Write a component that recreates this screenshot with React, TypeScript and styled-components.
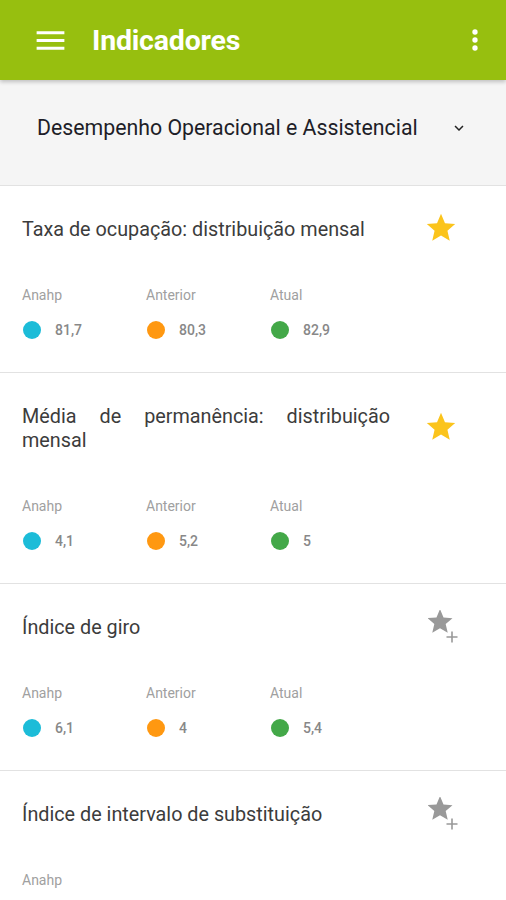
import styled, { createGlobalStyle } from 'styled-components';

type SeriesKey = 'anahp' | 'anterior' | 'atual';

type Indicator = {
  id: string;
  title: string;
  favorite: boolean;
  values: Partial<Record<SeriesKey, string>>;
};

const INDICATORS: Indicator[] = [
  {
    id: 'ocupacao',
    title: 'Taxa de ocupação: distribuição mensal',
    favorite: true,
    values: { anahp: '81,7', anterior: '80,3', atual: '82,9' },
  },
  {
    id: 'permanencia',
    title: 'Média de permanência: distribuição mensal',
    favorite: true,
    values: { anahp: '4,1', anterior: '5,2', atual: '5' },
  },
  {
    id: 'giro',
    title: 'Índice de giro',
    favorite: false,
    values: { anahp: '6,1', anterior: '4', atual: '5,4' },
  },
  {
    id: 'intervalo',
    title: 'Índice de intervalo de substituição',
    favorite: false,
    values: { anahp: '' },
  },
];

const SERIES: { key: SeriesKey; label: string; color: string }[] = [
  { key: 'anahp', label: 'Anahp', color: '#1cbcd8' },
  { key: 'anterior', label: 'Anterior', color: '#ff9811' },
  { key: 'atual', label: 'Atual', color: '#43a848' },
];

const GlobalStyle = createGlobalStyle`
  html, body {
    margin: 0;
    padding: 0;
    background: #fff;
  }
  body {
    font-family: Roboto, 'Noto Sans', Arial, sans-serif;
    -webkit-font-smoothing: antialiased;
  }
`;

const Screen = styled.div`
  width: 506px;
  height: 900px;
  overflow: hidden;
  background: #fff;
`;

const AppBar = styled.header`
  position: relative;
  z-index: 2;
  height: 80px;
  display: flex;
  align-items: center;
  padding: 0 15px 0 32px;
  background: #97bf0f;
  box-shadow: 0 2px 4px rgba(0, 0, 0, 0.22);
  color: #fff;

  h1 {
    flex: 1;
    margin: 0 0 0 23px;
    font-size: 28.5px;
    font-weight: 700;
    letter-spacing: -0.2px;
  }
`;

const IconButton = styled.span`
  display: flex;
  align-items: center;
  justify-content: center;
  line-height: 0;
`;

const CategoryBar = styled.div`
  height: 106px;
  box-sizing: border-box;
  display: flex;
  align-items: center;
  padding: 0 38px 10px 37px;
  background: #f5f5f5;
  border-bottom: 1px solid #e2e2e2;

  span {
    flex: 1;
    font-size: 21.3px;
    color: #1e1e28;
  }
`;

const Card = styled.article`
  padding: 32px 0 32px 22px;
  border-bottom: 1px solid #e2e2e2;
`;

const CardHead = styled.div`
  display: flex;

  h2 {
    width: 368px;
    flex: none;
    margin: 0;
    font-size: 19.8px;
    font-weight: 400;
    line-height: 24px;
    color: #3c3c3c;
    text-align: justify;
  }
`;

/* zero-height slot so the star never changes the row height;
   it stays centred on the title block */
const StarSlot = styled.div<{ $inset: number; $shift: number }>`
  align-self: center;
  height: 0;
  display: flex;
  align-items: center;
  margin-left: ${(p) => p.$inset}px;

  svg {
    flex: none;
    transform: translateY(${(p) => p.$shift}px);
  }
`;

const Stats = styled.div`
  display: grid;
  grid-template-columns: repeat(3, 124px);
  margin-top: 43px;
`;

const Stat = styled.div`
  display: flex;
  flex-direction: column;
  gap: 15px;
`;

const StatLabel = styled.span`
  font-size: 14px;
  line-height: 20px;
  color: #a0a0a0;
`;

const StatValue = styled.span`
  display: flex;
  align-items: center;
  gap: 14px;
  height: 20px;
  font-size: 14px;
  font-weight: 500;
  color: #888;
`;

const Dot = styled.i<{ $color: string }>`
  width: 18px;
  height: 18px;
  margin-left: 1px;
  border-radius: 50%;
  background: ${(p) => p.$color};
`;

const STAR_PATH =
  'M12 17.27 18.18 21l-1.64-7.03L22 9.24l-7.19-.61L12 2 9.19 8.63 2 9.24l5.46 4.73L5.82 21z';

const MenuIcon = () => (
  <svg width="37" height="37" viewBox="0 0 24 24" fill="#fff">
    <path d="M3 18h18v-2H3v2zm0-5h18v-2H3v2zm0-7v2h18V6H3z" />
  </svg>
);

const MoreIcon = () => (
  <svg width="32" height="32" viewBox="0 0 24 24" fill="#fff">
    <circle cx="12" cy="6" r="2" />
    <circle cx="12" cy="12" r="2" />
    <circle cx="12" cy="18" r="2" />
  </svg>
);

const ChevronIcon = () => (
  <svg width="18" height="18" viewBox="0 0 24 24" fill="#222">
    <path d="M16.59 8.59 12 13.17 7.41 8.59 6 10l6 6 6-6z" />
  </svg>
);

const StarIcon = () => (
  <svg width="34" height="34" viewBox="0 0 24 24" fill="#fbc41c">
    <path d={STAR_PATH} />
  </svg>
);

// star with a small plus at its lower right: "add to favourites"
const StarAddIcon = () => (
  <svg width="40" height="40" viewBox="0 0 40 40" fill="#999">
    <path transform="translate(-3 -3.4) scale(1.25)" d={STAR_PATH} />
    <path d="M18.5 27h11M24 21.5v11" stroke="#999" strokeWidth="1.6" />
  </svg>
);

export default function App() {
  return (
    <Screen>
      <GlobalStyle />
      <AppBar>
        <IconButton>
          <MenuIcon />
        </IconButton>
        <h1>Indicadores</h1>
        <IconButton>
          <MoreIcon />
        </IconButton>
      </AppBar>

      <CategoryBar>
        <span>Desempenho Operacional e Assistencial</span>
        <ChevronIcon />
      </CategoryBar>

      {INDICATORS.map((item) => (
        <Card key={item.id}>
          <CardHead>
            <h2>{item.title}</h2>
            {item.favorite ? (
              <StarSlot $inset={34} $shift={-2}>
                <StarIcon />
              </StarSlot>
            ) : (
              <StarSlot $inset={38} $shift={2}>
                <StarAddIcon />
              </StarSlot>
            )}
          </CardHead>
          <Stats>
            {SERIES.filter((s) => s.key in item.values).map((s) => (
              <Stat key={s.key}>
                <StatLabel>{s.label}</StatLabel>
                <StatValue>
                  <Dot $color={s.color} />
                  {item.values[s.key]}
                </StatValue>
              </Stat>
            ))}
          </Stats>
        </Card>
      ))}
    </Screen>
  );
}
